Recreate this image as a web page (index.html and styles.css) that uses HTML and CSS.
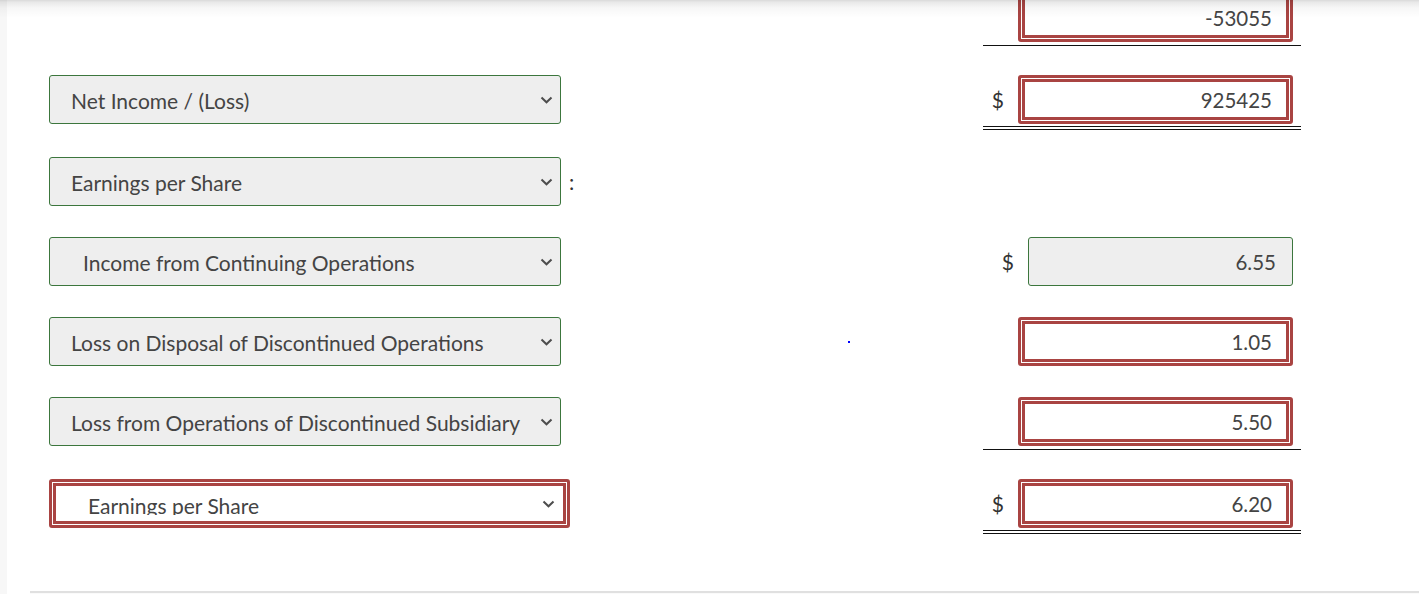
FILE: index.html
```html
<!DOCTYPE html>
<html lang="en">
<head>
<meta charset="utf-8">
<title>Income Statement</title>
<link rel="stylesheet" href="styles.css">
</head>
<body>
<div class="page">
  <div class="gutter"></div>
  <main class="main">
    <div class="row ruled row-top">
      <div class="amount single">
        <div class="input err">-53055</div>
      </div>
    </div>

    <div class="row ruled">
      <div class="select"><span class="select-text">Net Income / (Loss)</span><svg class="chev" width="13" height="8" viewBox="0 0 13 8"><polyline points="1.5,1.5 6.5,6.3 11.5,1.5"/></svg></div>
      <div class="amount double">
        <span class="dollar">$</span>
        <div class="input err">925425</div>
      </div>
    </div>

    <div class="row">
      <div class="select"><span class="select-text">Earnings per Share</span><svg class="chev" width="13" height="8" viewBox="0 0 13 8"><polyline points="1.5,1.5 6.5,6.3 11.5,1.5"/></svg></div>
      <span class="colon">:</span>
    </div>

    <div class="row">
      <div class="select indent"><span class="select-text">Income from Continuing Operations</span><svg class="chev" width="13" height="8" viewBox="0 0 13 8"><polyline points="1.5,1.5 6.5,6.3 11.5,1.5"/></svg></div>
      <div class="amount">
        <span class="dollar">$</span>
        <div class="input ok">6.55</div>
      </div>
    </div>

    <div class="row">
      <div class="select"><span class="select-text">Loss on Disposal of Discontinued Operations</span><svg class="chev" width="13" height="8" viewBox="0 0 13 8"><polyline points="1.5,1.5 6.5,6.3 11.5,1.5"/></svg></div>
      <span class="dot"></span>
      <div class="amount">
        <div class="input err">1.05</div>
      </div>
    </div>

    <div class="row ruled">
      <div class="select"><span class="select-text">Loss from Operations of Discontinued Subsidiary</span><svg class="chev" width="13" height="8" viewBox="0 0 13 8"><polyline points="1.5,1.5 6.5,6.3 11.5,1.5"/></svg></div>
      <div class="amount single">
        <div class="input err">5.50</div>
      </div>
    </div>

    <div class="row ruled">
      <div class="select err"><span class="select-text clipped">Earnings per Share</span><svg class="chev" width="13" height="8" viewBox="0 0 13 8"><polyline points="1.5,1.5 6.5,6.3 11.5,1.5"/></svg></div>
      <div class="amount double">
        <span class="dollar">$</span>
        <div class="input err">6.20</div>
      </div>
    </div>

    <div class="footer"></div>
  </main>
  <div class="shade"></div>
</div>
</body>
</html>
```

FILE: styles.css
```css
* {
  box-sizing: border-box;
}

html,
body {
  margin: 0;
  height: 100%;
  overflow: hidden;
  background: #fff;
}

body {
  font-family: Lato, "Liberation Sans", Arial, sans-serif;
  font-size: 20px;
  color: #444;
}

.page {
  position: relative;
  display: flex;
  height: 594px;
  overflow: hidden;
}

.gutter {
  flex: none;
  width: 7px;
  background: #f7f7f7;
}

.main {
  flex: 1;
  display: flex;
  flex-direction: column;
  padding: 0 118px 0 42px;
  background: #fff;
}

.row {
  flex: none;
  display: flex;
  align-items: flex-start;
  height: 49px;
  margin-bottom: 31px;
}

.row.ruled {
  margin-bottom: 33px;
}

.row-top {
  margin-top: -7px;
}

/* dropdowns */
.select {
  flex: none;
  width: 512px;
  height: 49px;
  display: flex;
  align-items: center;
  justify-content: space-between;
  background: #eee;
  border: 1px solid #3c763d;
  border-radius: 3px;
  padding: 1px 7px 0 21px;
}

.select.indent {
  padding-left: 33px;
}

.select.err {
  width: 521px;
  background: #fff;
  border: 3px solid #a94442;
  box-shadow: inset 0 0 0 1px #fff, inset 0 0 0 4px #a94442;
  padding: 0 12px 0 36px;
}

.select-text {
  font-size: 21px;
  line-height: 25px;
  white-space: nowrap;
  color: #444;
}

.select-text.clipped {
  align-self: flex-start;
  margin-top: 11px;
  height: 22px;
  overflow: hidden;
}

.chev {
  flex: none;
  display: block;
}

.chev polyline {
  fill: none;
  stroke: #4d4d4d;
  stroke-width: 2;
}

.colon {
  margin-left: 8px;
  font-size: 21px;
  line-height: 49px;
  color: #333;
}

.dot {
  align-self: center;
  width: 2px;
  height: 2px;
  margin-left: 287px;
  background: #0000ff;
}

/* amounts */
.amount {
  flex: none;
  width: 318px;
  margin-left: auto;
  display: flex;
  justify-content: flex-end;
  align-items: center;
  gap: 14px;
  padding-right: 8px;
}

.amount.single {
  padding-bottom: 3px;
  border-bottom: 1px solid #111;
}

.amount.double {
  padding-bottom: 2px;
  border-bottom: 4px double #111;
}

.dollar {
  font-size: 21px;
  color: #333;
  line-height: 24px;
}

.input {
  flex: none;
  height: 49px;
  display: flex;
  align-items: center;
  justify-content: flex-end;
  font-size: 20.5px;
  color: #444;
  border-radius: 3px;
}

.input.err {
  width: 275px;
  background: #fff;
  border: 3px solid #a94442;
  box-shadow: inset 0 0 0 1px #fff, inset 0 0 0 4px #a94442;
  padding-right: 18px;
}

.input.ok {
  width: 265px;
  background: #eee;
  border: 1px solid #3c763d;
  padding-right: 16px;
}

.footer {
  flex: none;
  height: 4px;
  margin: 30px -118px 0 -19px;
  border-top: 2px solid #e0e0e0;
  background: #fafafa;
}

/* header shadow lying over the scrolled content */
.shade {
  position: absolute;
  top: 0;
  left: 0;
  right: 0;
  height: 18px;
  pointer-events: none;
  background: linear-gradient(to bottom, rgba(0, 0, 0, 0.15) 0, rgba(0, 0, 0, 0.09) 2px, rgba(0, 0, 0, 0.03) 8px, rgba(0, 0, 0, 0) 18px);
}
```
